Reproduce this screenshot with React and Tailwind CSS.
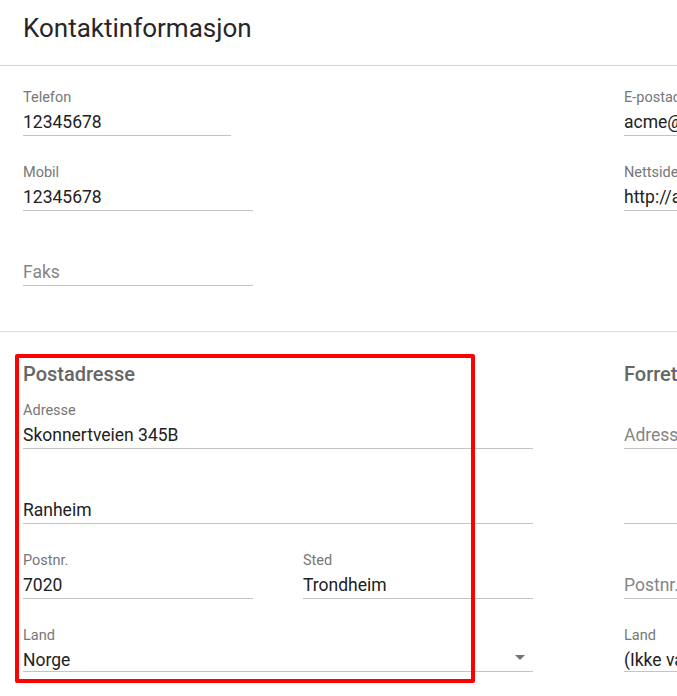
import React from "react";

// one underlined text field, material style
function Field({ label, value, placeholder, width = "w-full", select = false }) {
    return (
        <div className={"flex flex-col " + width}>
            <div className="h-[16px] pt-[1px] text-[14.5px] leading-[16px] text-[#777] whitespace-nowrap">{label}</div>
            <div className={"relative mt-[6px] border-b border-[#c4c4c4] " + (select ? "pb-0" : "pb-[2px]")}>
                {value ? (
                    <div className="h-[22px] text-[17.5px] leading-[22px] text-[#222] whitespace-nowrap">{value}</div>
                ) : (
                    <div className="h-[22px] text-[17.5px] leading-[22px] text-[#858585] whitespace-nowrap">{placeholder}</div>
                )}
                {select && (
                    <svg className="absolute right-[8px] top-[6px]" width="10" height="5" viewBox="0 0 10 5">
                        <path d="M0 0h10L5 5z" fill="#757575" />
                    </svg>
                )}
            </div>
        </div>
    );
}

function App() {
    return (
        <div className="w-[677px] h-[696px] overflow-hidden bg-white font-['Roboto',sans-serif]">
            <div className="w-[1300px]">
                {/* header */}
                <div className="h-[66px] border-b border-[#d6d6d6] px-[23px] pt-[12px]">
                    <h1 className="text-[26px] leading-[32px] text-[#262626]">Kontaktinformasjon</h1>
                </div>

                {/* contact numbers */}
                <div className="flex gap-[91px] px-[23px] pt-[23px] pb-[45px] border-b border-[#dcdcdc]">
                    <div className="w-[510px] flex flex-col gap-[28px]">
                        <Field label="Telefon" value="12345678" width="w-[208px]" />
                        <Field label="Mobil" value="12345678" width="w-[230px]" />
                        <Field label="" placeholder="Faks" width="w-[230px]" />
                    </div>
                    <div className="w-[510px] flex flex-col gap-[28px]">
                        <Field label="E-postadresse" value="acme@acme.no" width="w-[230px]" />
                        <Field label="Nettside" value="http://acme.no" width="w-[230px]" />
                    </div>
                </div>

                {/* addresses */}
                <div className="relative flex gap-[91px] px-[23px] pt-[30px]">
                    <div className="w-[510px] flex flex-col">
                        <h2 className="text-[20px] leading-[24px] font-medium text-[#666]">Postadresse</h2>
                        <div className="mt-[16px] flex flex-col gap-[28px]">
                            <Field label="Adresse" value="Skonnertveien 345B" />
                            <Field label="" value="Ranheim" />
                            <div className="grid grid-cols-2 gap-[50px]">
                                <Field label="Postnr." value="7020" />
                                <Field label="Sted" value="Trondheim" />
                            </div>
                            <Field label="Land" value="Norge" select />
                        </div>
                    </div>
                    <div className="w-[510px] flex flex-col">
                        <h2 className="text-[20px] leading-[24px] font-medium text-[#666]">Forretningsadresse</h2>
                        <div className="mt-[16px] flex flex-col gap-[28px]">
                            <Field label="" placeholder="Adresse" />
                            <Field label="" placeholder="" />
                            <div className="grid grid-cols-2 gap-[50px]">
                                <Field label="" placeholder="Postnr." />
                                <Field label="" placeholder="Sted" />
                            </div>
                            <Field label="Land" value="(Ikke valgt)" select />
                        </div>
                    </div>

                    {/* red highlight annotation */}
                    <div className="absolute left-[15px] top-[22px] w-[460px] h-[329px] border-4 border-[#ff0000] rounded-[2px] pointer-events-none" />
                </div>
            </div>
        </div>
    );
}

export default App;
